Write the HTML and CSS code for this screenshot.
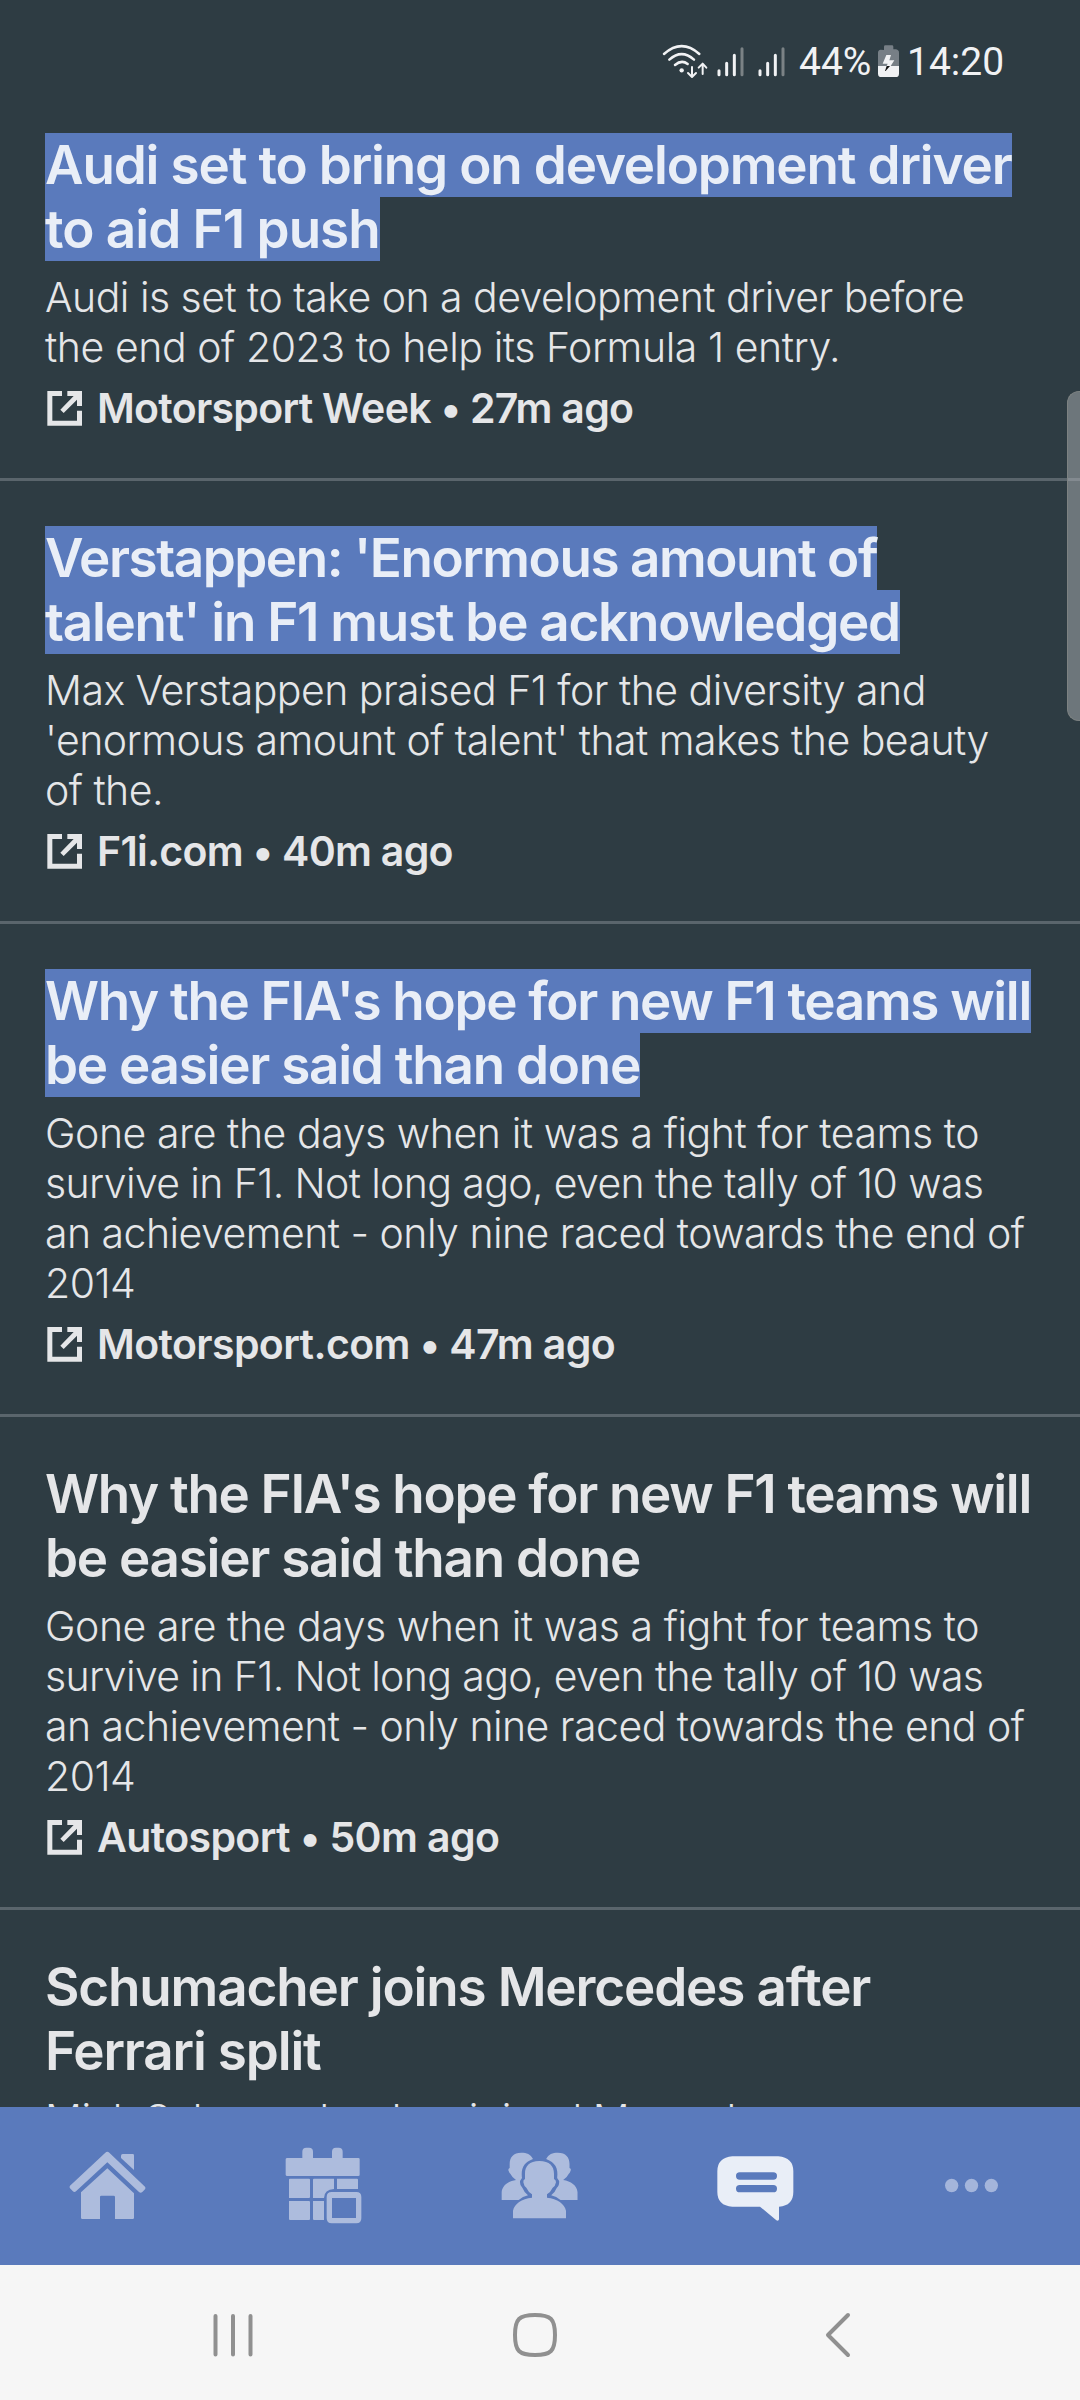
FILE: index.html
```html
<!DOCTYPE html>
<html lang="en">
<head>
<meta charset="utf-8">
<title>F1 News</title>
<link rel="stylesheet" href="styles.css">
</head>
<body>
<svg class="defs" width="0" height="0" aria-hidden="true">
  <symbol id="external" viewBox="45 918 114 150">
    <path d="M96 942H52V1046H156V1001H141V1031H67V957H96ZM112 942H156V987H141V968L101 1008L91 998L131 957H112Z"/>
  </symbol>
</svg>
<div class="screen">
  <header class="status">
    <svg class="signals" viewBox="0 0 405 150">
      <g fill="none" stroke="#f1f2f4" stroke-width="7.5" stroke-linecap="round" stroke-linejoin="round">
        <path d="M27 57Q80 10 133 57M43 74Q80 41 117 74M60 90Q80 73 98 87"/>
        <path d="M111 96V124M99 114L111 126L123 114M143 117V88M131 98L143 86L154 98" stroke-width="6"/>
        <path d="M192 107V119M215 85V119M238 61V119M315 107V119M338 85V119M361 61V119" stroke-width="9"/>
        <path d="M261 41V119M384 41V119" stroke="#7b8285" stroke-width="9"/>
      </g>
      <circle cx="80" cy="106" r="6.5" fill="#f1f2f4"/>
    </svg>
    <span class="percent">44%</span>
    <svg class="battery" viewBox="714 45 63 150">
      <path d="M732 90V80Q732 76 736 76H756Q760 76 760 80V88H768Q777 90 777 98V138H714V98Q714 90 722 89Z" fill="#777f86"/>
      <path d="M714 138H777V161Q777 171 767 171H724Q714 171 714 161Z" fill="#f1f2f4"/>
      <path d="M739 105H753L748 121H763L752 138H740L743 131H728Z" fill="#f1f2f4"/>
      <path d="M740 138H750L737 153H735Z" fill="#111"/>
    </svg>
    <span class="clock">14:20</span>
  </header>

  <main class="feed">
    <article class="story">
      <h2 class="title"><span class="mark">Audi set to bring on development driver<br><span class="wide">to aid F1 push</span></span></h2>
      <p class="summary">Audi is set to take on a development driver before<br><span class="loose">the end of 2023 to help its Formula 1 entry.</span></p>
      <div class="source tight"><svg class="ext"><use href="#external"/></svg><span>Motorsport Week • 27m ago</span></div>
    </article>
    <article class="story">
      <h2 class="title"><span class="mark narrow"><span class="narrower">Verstappen: 'Enormous amount of</span><br>talent' in F1 must be acknowledged</span></h2>
      <p class="summary">Max Verstappen praised F1 for the diversity and<br>'enormous amount of talent' that makes the beauty<br>of the.</p>
      <div class="source tight"><svg class="ext"><use href="#external"/></svg><span>F1i.com • 40m ago</span></div>
    </article>
    <article class="story">
      <h2 class="title"><span class="mark narrow"><span class="narrow-lead">Why the FIA's hope for new F1 teams will</span><br>be easier said than done</span></h2>
      <p class="summary"><span class="loose">Gone are the days when it was a fight for teams to</span><br><span class="snug">survive in F1. Not long ago, even the tally of 10 was</span><br>an achievement - only nine raced towards the end of<br>2014</p>
      <div class="source"><svg class="ext"><use href="#external"/></svg><span>Motorsport.com • 47m ago</span></div>
    </article>
    <article class="story">
      <h2 class="title narrow"><span class="narrow-lead">Why the FIA's hope for new F1 teams will</span><br>be easier said than done</h2>
      <p class="summary"><span class="loose">Gone are the days when it was a fight for teams to</span><br><span class="snug">survive in F1. Not long ago, even the tally of 10 was</span><br>an achievement - only nine raced towards the end of<br>2014</p>
      <div class="source"><svg class="ext"><use href="#external"/></svg><span>Autosport • 50m ago</span></div>
    </article>
    <article class="story">
      <h2 class="title">Schumacher joins Mercedes after<br>Ferrari split</h2>
      <p class="summary">Mick Schumacher has joined Mercedes</p>
    </article>
  </main>

  <nav class="tabs">
    <a class="tab"><svg viewBox="69 123 270 270">
      <path d="M196 158Q202 153 208 158L315 260Q318 264 315 268L307 276Q302 280 297 276L202 187L108 274Q103 278 98 273L90 265Q87 261 90 257Z"/>
      <path d="M202 205L282 280V353Q282 357 278 357H225V291Q225 287 221 287H184Q180 287 180 291V357H127Q123 357 123 353V277Z"/>
      <path d="M248 162H278Q282 162 282 166V210L243 174V167Q243 162 248 162Z"/>
    </svg></a>
    <a class="tab"><svg viewBox="717 123 270 270">
      <path d="M742 174H787V155Q787 143 799 143H807Q819 143 819 155V174H876V155Q876 143 888 143H896Q908 143 908 155V174H955Q959 174 959 178V224Q959 228 955 228H742Q737 228 737 224V178Q737 174 742 174Z"/>
      <path d="M750 236H807Q810 236 810 239V291Q810 294 807 294H747V239Q747 236 750 236ZM822 236H882V267Q853 268 852 294H819V239Q819 236 822 236ZM891 236H951Q954 236 954 239V267H891ZM747 303H807Q810 303 810 306V357Q810 360 807 360H750Q747 360 747 357ZM819 303H852V360H822Q819 360 819 357Z"/>
      <path fill-rule="evenodd" d="M875 276H949Q964 276 964 291V355Q964 370 949 370H875Q860 370 860 355V291Q860 276 875 276ZM876 294V354H948V294Z"/>
    </svg></a>
    <a class="tab"><svg viewBox="105 123 270 270">
      <path id="friend" d="M219 177C212 162 200 158 184 158C160 158 149 172 149 192V204Q143 206 146 213Q148 219 151 221Q157 233 168 240C145 244 127 256 125 276V300H176Q188 289 204 286Q192 276 187 263Q179 257 180 243L186 234C182 205 192 187 219 177Z"/>
      <use href="#friend" transform="matrix(-1 0 0 1 477.500 0)"/>
      <path d="M238 183C208 183 195 199 195 221V237Q189 239 190 247Q192 259 199 263Q205 276 216 283V293C185 295 163 312 159 332V355H318V332C314 312 292 295 261 293V283Q272 276 278 263Q286 259 288 247Q288 239 282 237V221C282 199 269 183 238 183Z"/>
    </svg></a>
    <a class="tab active"><svg viewBox="753 123 270 270">
      <path fill-rule="evenodd" d="M817 169H955Q1000 173 1000 214V276Q1000 317 957 320V358Q956 364 949 361L900 320H817Q772 317 772 276V214Q772 173 817 169ZM839 217A11 11 0 0 0 839 239H940A11 11 0 0 0 940 217ZM839 255A11 11 0 0 0 839 277H940A11 11 0 0 0 940 255Z"/>
    </svg></a>
    <a class="tab more"><svg viewBox="141 123 270 270">
      <circle cx="215" cy="256.500" r="20"/><circle cx="274.500" cy="256.500" r="20"/><circle cx="334" cy="256.500" r="20"/>
    </svg></a>
  </nav>

  <footer class="system">
    <div class="key"><svg viewBox="0 0 60 60"><path d="M12.500 11V49.500M30 11V49.500M47.500 11V49.500"/></svg></div>
    <div class="key"><svg viewBox="0 0 60 60"><path d="M30 10C46 10 50 14 50 30S46 50 30 50S10 46 10 30S14 10 30 10Z"/></svg></div>
    <div class="key"><svg viewBox="0 0 60 60"><path d="M41 10L21 30L41 50"/></svg></div>
  </footer>
  <div class="thumb"></div>
</div>
</body>
</html>
```
FILE: styles.css
```css
* { box-sizing: border-box; }
body { margin: 0; background: #2e3c43; }
.defs { position: absolute; }
.screen {
  position: relative;
  width: 1080px;
  height: 2400px;
  overflow: hidden;
  display: flex;
  flex-direction: column;
  background: #2e3c43;
  color: #e5e6e8;
  font-family: Inter, "Liberation Sans", sans-serif;
}

.status {
  flex: none;
  display: flex;
  align-items: flex-start;
  height: 88px;
  padding: 35px 0 0 655px;
  color: #f1f2f4;
  font: 39px/54px Roboto, sans-serif;
}
.signals { width: 135px; height: 50px; margin-right: 9px; }
.percent { width: 79px; }
.battery { width: 21px; height: 50px; margin-right: 8px; }

.feed { flex: 1; min-height: 0; overflow: hidden; }
.story { padding: 45px 0 45px 45px; white-space: nowrap; border-bottom: 3px solid #5a656c; }
.title {
  margin: 0;
  font-size: 53px;
  font-weight: 600;
  line-height: 64px;
  letter-spacing: -1.16px;
}
.mark { background: #5a7abc; color: #e9eef7; }
.summary {
  margin: 11px 0;
  font-size: 41px;
  font-weight: 300;
  line-height: 50px;
  letter-spacing: -0.53px;
}
.source {
  display: flex;
  gap: 14px;
  height: 50px;
  font-size: 41px;
  font-weight: 600;
  line-height: 50px;
  letter-spacing: -0.62px;
}
.ext { width: 38px; height: 50px; fill: #e5e6e8; }

/* Tracking adjustments */
.wide { letter-spacing: -0.99px; }
.narrow { letter-spacing: -1.26px; }
.narrow-lead { letter-spacing: -1.32px; }
.narrower { letter-spacing: -1.46px; }
.loose { letter-spacing: -0.44px; }
.snug { letter-spacing: -0.63px; }
.tight { letter-spacing: -0.72px; }

.tabs {
  flex: none;
  display: grid;
  grid-template-columns: repeat(5, 1fr);
  place-items: center;
  height: 158px;
  background: #5a7abc;
}
.tab { display: flex; fill: #adbcdd; }
.tab svg { width: 90px; height: 90px; }
.tab.active { fill: #e9eef7; }
.tab.more { fill: #a4b5db; }

.system {
  flex: none;
  display: flex;
  height: 135px;
  padding: 40px 0 0 82px;
  background: #f6f6f6;
}
.key { width: 302px; display: flex; justify-content: center; }
.key svg {
  width: 60px;
  height: 60px;
  fill: none;
  stroke: #909090;
  stroke-width: 4;
  stroke-linecap: round;
  stroke-linejoin: round;
}

.thumb {
  position: absolute;
  top: 391px;
  right: 0;
  width: 13px;
  height: 330px;
  border: 1px solid #7d8282;
  border-right: 0;
  border-radius: 12px 0 0 12px;
  background: rgba(172, 176, 180, 0.5);
}
```
